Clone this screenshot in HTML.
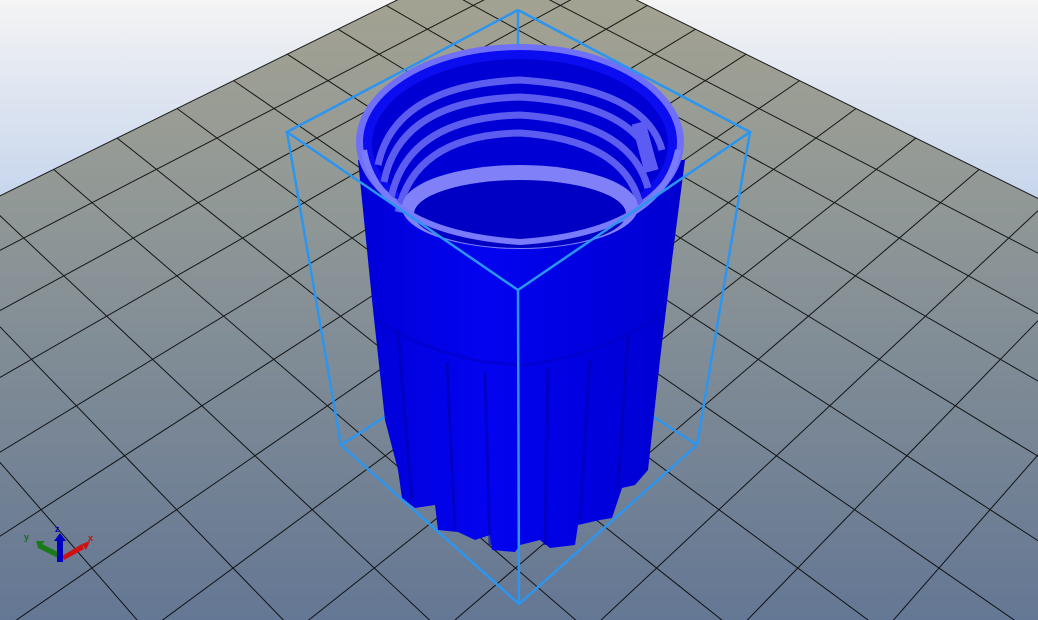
<!DOCTYPE html>
<html><head><meta charset="utf-8"><style>
html,body{margin:0;padding:0;width:1038px;height:620px;overflow:hidden;background:#c9d8ec}
svg{display:block}
</style></head><body>
<svg id="s" width="1038" height="620" viewBox="0 0 1038 620" xmlns="http://www.w3.org/2000/svg">
<defs>
<linearGradient id="sky" x1="0" y1="0" x2="0" y2="220" gradientUnits="userSpaceOnUse"><stop offset="0" stop-color="#f4f4f4"/><stop offset="1" stop-color="#c2d2ec"/></linearGradient>
<linearGradient id="gnd" x1="0" y1="0" x2="0" y2="620" gradientUnits="userSpaceOnUse"><stop offset="0" stop-color="#a3a292"/><stop offset="0.35" stop-color="#8f9796"/><stop offset="1" stop-color="#647794"/></linearGradient>
<linearGradient id="body" x1="0" y1="0" x2="1" y2="0"><stop offset="0" stop-color="#0000d8"/><stop offset="0.4" stop-color="#0303f0"/><stop offset="0.7" stop-color="#0000e0"/><stop offset="1" stop-color="#0000d0"/></linearGradient>
</defs>
<rect width="1038" height="620" fill="url(#sky)"/>
<polygon id="gp" points="515,-48 1038,215 1038,620 0,620 0,213" fill="url(#gnd)"/>
<g id="grid" stroke="#000" stroke-width="1" opacity="0.85"></g>
<g stroke="#2b95ef" stroke-width="2.5" fill="none">
<line x1="341" y1="445" x2="400" y2="407"/>
<line x1="697" y1="445" x2="640" y2="408"/>
</g>
<path d="M358,160 L372,300 L385,420 L398,470 L402,498 L415,508 L435,505 L438,530 L458,532 L475,540 L490,535 L492,550 L515,552 L520,545 L540,540 L550,548 L575,545 L578,525 L600,520 L612,518 L622,488 L635,485 L648,470 L660,360 L672,260 L685,160 Z" fill="url(#body)"/>
<g stroke="#0000a8" stroke-width="3" opacity="0.55" fill="none">
<path d="M398,330 L412,500"/><path d="M447,362 L455,530"/><path d="M485,372 L490,545"/><path d="M548,368 L545,545"/><path d="M590,360 L580,520"/><path d="M628,335 L618,490"/>
</g>
<path d="M378,320 Q420,350 485,362 L520,365 Q590,360 662,315" stroke="#0000c0" stroke-width="3" fill="none" opacity="0.5"/>
<ellipse cx="520" cy="142" rx="164" ry="98" fill="#6f6ff8"/>
<ellipse cx="520" cy="142" rx="157" ry="92" fill="#0c0cf0"/>
<ellipse cx="520" cy="144" rx="148" ry="85" fill="#0000d4"/>
<g fill="none" stroke="#5c5cf0" stroke-width="7">
<path d="M378,165 Q395,85 520,80 Q645,88 662,150"/>
<path d="M384,182 Q400,100 520,97 Q640,104 655,170"/>
<path d="M391,198 Q408,118 520,115 Q630,122 648,188"/>
<path d="M398,212 Q415,135 520,133 Q625,140 640,205"/>
</g>
<ellipse cx="520" cy="207" rx="118" ry="42" fill="#8080f8"/>
<ellipse cx="520" cy="214" rx="106" ry="34" fill="#0000c4"/>
<path d="M364,150 Q378,232 520,242 Q662,232 678,150" fill="none" stroke="#7a7afc" stroke-width="6"/>
<rect x="638" y="122" width="14" height="50" fill="#5c5cf4" transform="rotate(-15 645 147)"/>
<g stroke="#2b95ef" stroke-width="2.5" fill="none">
<polyline points="518,10 287,132 518,290 750,132 518,10"/>
<line x1="518" y1="10" x2="518" y2="45"/>
<line x1="518" y1="290" x2="519" y2="604"/>
<line x1="287" y1="132" x2="341" y2="445"/>
<line x1="750" y1="132" x2="697" y2="445"/>
<polyline points="341,445 519,604 697,445"/>
</g>
<g>
<polygon points="58,558 38,548 40,543 60,553" fill="#1a7a1a"/>
<polygon points="38,548 36,541 45,541" fill="#1a7a1a"/>
<polygon points="62,556 82,544 84,549 64,560" fill="#d01010"/>
<polygon points="82,544 90,541 86,550" fill="#d01010"/>
<rect x="57" y="540" width="6" height="22" fill="#0000c0"/>
<polygon points="54,541 60,533 66,541" fill="#0000c0"/>
<text x="55" y="532" font-family="Liberation Sans,sans-serif" font-size="9" fill="#0000c0" font-weight="bold">z</text>
<text x="88" y="541" font-family="Liberation Sans,sans-serif" font-size="9" fill="#c01010" font-weight="bold">x</text>
<text x="24" y="540" font-family="Liberation Sans,sans-serif" font-size="9" fill="#1a6a1a" font-weight="bold">y</text>
</g>
</svg>
<script>
(function(){
var f=1200,cx=519,cy=310,s=0.71,c=0.704,H=29;
var X0=-0.1,Y0=54.2,r=Math.SQRT1_2,st=2.8;
function P(u,v){var x=X0+(u-v)*r,y=Y0-(u+v)*r;var yc=y*s-H*c,zc=y*c+H*s;return [cx+f*x/zc,cy-f*yc/zc];}
var g=document.getElementById('grid'),out='';
var N=18,L=N*st;
for(var i=0;i<=N;i++){
 var k=i*st;
 var a=P(k,0),b=P(k,L),b3=P(0,k),e=P(L,k);
 out+='<line x1="'+a[0]+'" y1="'+a[1]+'" x2="'+b[0]+'" y2="'+b[1]+'"/>';
 out+='<line x1="'+b3[0]+'" y1="'+b3[1]+'" x2="'+e[0]+'" y2="'+e[1]+'"/>';
}
g.innerHTML=out;
var p0=P(0,0),p1=P(L,0),p2=P(L,L),p3=P(0,L);
document.getElementById('gp').setAttribute('points',[p0,p1,p2,p3].map(function(p){return p[0]+','+p[1];}).join(' '));
})();
</script>
</body></html>
